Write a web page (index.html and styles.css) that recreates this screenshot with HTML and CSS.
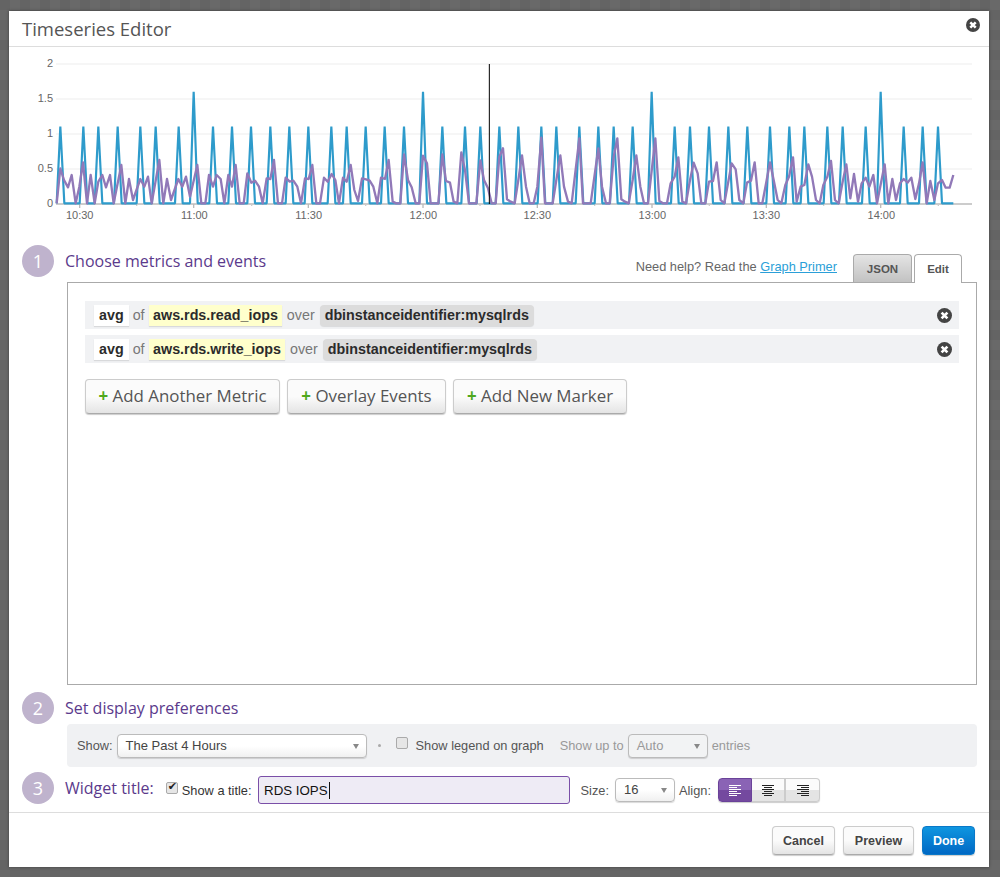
FILE: index.html
```html
<!DOCTYPE html>
<html lang="en">
<head>
    <meta charset="UTF-8">
    <title>Timeseries Editor</title>
    <link rel="stylesheet" href="styles.css">
</head>
<body>
    <div class="modal">
        <div class="modal-header">
            <h1>Timeseries Editor</h1>
            <svg class="close-icon close-top" viewBox="0 0 14 14"><circle cx="7" cy="7" r="7"/><path d="M4.3 4.3l5.4 5.4M9.700 4.300l-5.400 5.400"/></svg>
        </div>

        <svg class="chart" viewBox="27 141 2940 564">
            <g class="grid">
                <line x1="168" y1="192" x2="2916" y2="192"/>
                <line x1="168" y1="297" x2="2916" y2="297"/>
                <line x1="168" y1="402" x2="2916" y2="402"/>
                <line x1="168" y1="507" x2="2916" y2="507"/>
            </g>
            <g class="axis">
                <line x1="168" y1="612" x2="2916" y2="612"/>
                <path d="M239 612v12M581 612v12M925 612v12M1269 612v12M1612 612v12M1956 612v12M2299 612v12M2642 612v12"/>
                <path class="minor" d="M410 612v6M755 612v6M1097 612v6M1440 612v6M1784 612v6M2128 612v6M2471 612v6M2815 612v6"/>
            </g>
            <g class="y-labels">
                <text x="159" y="201">2</text>
                <text x="159" y="306">1.5</text>
                <text x="159" y="411">1</text>
                <text x="159" y="516">0.5</text>
                <text x="159" y="621">0</text>
            </g>
            <g class="x-labels">
                <text x="239" y="657">10:30</text>
                <text x="583" y="657">11:00</text>
                <text x="926" y="657">11:30</text>
                <text x="1270" y="657">12:00</text>
                <text x="1612" y="657">12:30</text>
                <text x="1957" y="657">13:00</text>
                <text x="2299" y="657">13:30</text>
                <text x="2644" y="657">14:00</text>
            </g>
            <polyline class="series-read" points="170,610 181,380 193,610 239,610 250,380 262,610 284,610 295,380 307,610 342,610 353,380 365,610 410,610 421,380 433,610 456,610 467,380 479,610 525,610 536,380 548,610 570,610 581,275 593,610 628,610 639,380 651,610 685,610 696,380 708,610 742,610 753,380 765,610 800,610 811,380 823,610 857,610 868,380 880,610 914,610 925,380 937,610 983,610 994,380 1006,610 1029,610 1040,380 1052,610 1086,610 1097,380 1109,610 1143,610 1154,380 1166,610 1201,610 1212,380 1224,610 1258,610 1269,275 1281,610 1316,610 1327,380 1339,610 1384,610 1395,380 1407,610 1430,610 1441,380 1453,610 1487,610 1498,380 1510,610 1544,610 1555,380 1567,610 1613,610 1624,380 1636,610 1658,610 1669,380 1681,610 1727,610 1738,380 1750,610 1784,610 1795,380 1807,610 1830,610 1841,380 1853,610 1887,610 1898,380 1910,610 1944,610 1955,275 1967,610 2013,610 2024,380 2036,610 2059,610 2070,380 2082,610 2116,610 2127,380 2139,610 2174,610 2185,380 2197,610 2231,610 2242,380 2254,610 2299,610 2310,380 2322,610 2357,610 2368,380 2380,610 2402,610 2413,380 2425,610 2471,610 2482,380 2494,610 2517,610 2528,380 2540,610 2586,610 2597,380 2609,610 2631,610 2642,275 2654,610 2700,610 2711,380 2723,610 2757,610 2768,380 2780,610 2803,610 2814,380 2826,610 2860,610"/>
            <polyline class="series-write" points="170,610 181,505 192,540 204,562 215,525 227,610 238,560 249,487 261,610 272,525 284,610 295,545 307,525 318,562 330,525 341,610 364,495 376,610 387,537 399,600 421,537 433,560 444,530 455,610 478,480 490,610 501,537 513,600 535,537 547,560 558,530 570,590 592,495 604,610 616,610 627,525 639,560 650,525 662,537 673,610 685,525 696,560 707,495 719,610 731,610 742,520 754,548 765,542 777,560 788,610 800,535 811,537 822,480 834,610 846,610 857,533 869,545 880,542 892,560 903,610 915,535 926,537 937,495 949,610 960,610 972,533 983,545 995,522 1006,540 1017,610 1029,533 1040,545 1052,495 1063,570 1074,603 1086,535 1098,538 1109,542 1120,560 1132,610 1143,533 1155,537 1166,480 1178,605 1189,610 1201,610 1212,463 1224,540 1235,562 1247,610 1258,610 1269,467 1281,490 1292,610 1315,610 1327,463 1338,543 1350,548 1361,605 1372,610 1384,457 1395,510 1407,610 1429,610 1441,481 1452,540 1464,565 1475,610 1487,610 1498,470 1509,445 1521,598 1532,605 1544,610 1555,540 1566,466 1578,560 1589,610 1601,610 1612,560 1624,413 1635,610 1658,610 1669,540 1681,466 1692,560 1704,605 1715,610 1738,415 1749,610 1772,610 1795,445 1806,560 1818,610 1829,610 1841,470 1852,415 1864,598 1875,605 1886,610 1898,540 1909,466 1921,560 1932,610 1944,610 1966,415 1978,603 1989,610 2001,610 2012,550 2024,530 2035,472 2047,605 2058,610 2070,540 2081,488 2093,520 2104,610 2116,610 2127,545 2139,543 2150,487 2162,600 2173,610 2195,490 2207,508 2218,600 2230,610 2241,548 2253,542 2264,487 2276,610 2287,610 2310,487 2321,540 2333,600 2344,610 2356,555 2367,530 2379,472 2390,605 2402,560 2413,555 2425,493 2436,530 2448,600 2459,610 2470,555 2482,530 2493,483 2505,600 2516,610 2528,545 2539,493 2551,595 2562,522 2574,605 2585,550 2597,533 2608,560 2620,525 2631,610 2654,493 2665,610 2677,537 2688,600 2700,550 2711,537 2723,548 2734,533 2746,597 2757,550 2768,487 2780,610 2791,543 2803,600 2814,550 2826,540 2837,563 2849,563 2860,525"/>
            <line class="cursor" x1="1468" y1="192" x2="1468" y2="612"/>
        </svg>

        <div class="step step-one">
            <div class="step-head">
                <span class="step-num">1</span>
                <h2>Choose metrics and events</h2>
                <div class="help">Need help? Read the <a href="#">Graph Primer</a></div>
                <div class="tabs">
                    <div class="tab">JSON</div>
                    <div class="tab active">Edit</div>
                </div>
            </div>
            <div class="panel">
                <div class="metric">
                    <span class="chip chip-white">avg</span>
                    <span class="word word-of">of</span>
                    <span class="chip chip-yellow">aws.rds.read_iops</span>
                    <span class="word">over</span>
                    <span class="chip chip-grey">dbinstanceidentifier:mysqlrds</span>
                    <svg class="close-icon" viewBox="0 0 14 14"><circle cx="7" cy="7" r="7"/><path d="M4.3 4.3l5.4 5.400M9.700 4.300l-5.400 5.400"/></svg>
                </div>
                <div class="metric">
                    <span class="chip chip-white">avg</span>
                    <span class="word word-of">of</span>
                    <span class="chip chip-yellow">aws.rds.write_iops</span>
                    <span class="word">over</span>
                    <span class="chip chip-grey">dbinstanceidentifier:mysqlrds</span>
                    <svg class="close-icon" viewBox="0 0 14 14"><circle cx="7" cy="7" r="7"/><path d="M4.3 4.3l5.4 5.400M9.700 4.300l-5.400 5.400"/></svg>
                </div>
                <div class="add-row">
                    <button class="btn-add btn-metric"><b>+</b> Add Another Metric</button>
                    <button class="btn-add btn-events"><b>+</b> Overlay Events</button>
                    <button class="btn-add btn-marker"><b>+</b> Add New Marker</button>
                </div>
            </div>
        </div>

        <div class="step step-two">
            <div class="step-head">
                <span class="step-num">2</span>
                <h2>Set display preferences</h2>
            </div>
            <div class="prefs">
                <span class="label">Show:</span>
                <div class="select select-time">The Past 4 Hours<i class="arrow"></i></div>
                <span class="dot"></span>
                <input type="checkbox" class="check check-legend">
                <span class="label legend-label">Show legend on graph</span>
                <span class="label muted up-to">Show up to</span>
                <div class="select select-auto">Auto<i class="arrow"></i></div>
                <span class="label muted">entries</span>
            </div>
        </div>

        <div class="step step-three">
            <span class="step-num">3</span>
            <h2 class="title-head">Widget title:</h2>
            <div class="title-controls">
                <input type="checkbox" class="check check-title" checked>
                <span class="label show-title">Show a title:</span>
                <div class="title-input">RDS IOPS<i class="caret"></i></div>
                <span class="label">Size:</span>
                <div class="select select-size">16<i class="arrow"></i></div>
                <span class="label">Align:</span>
                <div class="align-group">
                    <button class="align active">
                        <svg viewBox="0 0 12 11"><path d="M0 .5h12M0 2.500h8M0 4.500h12M0 6.500h8M0 8.500h12M0 10.500h8"/></svg>
                    </button>
                    <button class="align">
                        <svg viewBox="0 0 12 11"><path d="M0 .5h12M2 2.500h8M0 4.500h12M2 6.500h8M0 8.500h12M2 10.500h8"/></svg>
                    </button>
                    <button class="align">
                        <svg viewBox="0 0 12 11"><path d="M0 .5h12M4 2.500h8M0 4.500h12M4 6.500h8M0 8.500h12M4 10.500h8"/></svg>
                    </button>
                </div>
            </div>
        </div>

        <div class="modal-footer">
            <button class="btn btn-cancel">Cancel</button>
            <button class="btn btn-preview">Preview</button>
            <button class="btn btn-done">Done</button>
        </div>
    </div>
</body>
</html>
```

FILE: styles.css
```css
html, body {
    height: 100%;
}
body {
    margin: 0;
    padding: 11px 0 0 9px;
    box-sizing: border-box;
    overflow: hidden;
    font-family: "Liberation Sans", Arial, sans-serif;
    font-size: 12.8px;
    color: #444;
    background-color: #666;
    background-image: repeating-conic-gradient(#696969 0 25%, #646464 0 50%);
    background-size: 20px 20px;
}
h1, h2 {
    margin: 0;
    font-family: "Open Sans", sans-serif;
    font-weight: 400;
}
button {
    font-family: inherit;
    cursor: pointer;
}
.modal {
    width: 980px;
    height: 856px;
    background: #fff;
    box-shadow: 0 0 3px rgba(0, 0, 0, 0.4);
}
.modal-header {
    height: 35px;
    display: flex;
    justify-content: space-between;
    padding: 0 9px 0 13px;
    border-bottom: 1px solid #ddd;
}
.modal-header h1 {
    font-size: 18.5px;
    line-height: 36px;
    color: #555;
}
.close-icon {
    width: 15px;
    height: 15px;
    flex: none;
}
.close-icon circle {
    fill: #444;
}
.close-icon path {
    fill: none;
    stroke: #fff;
    stroke-width: 2.500;
}
.close-top {
    width: 14px;
    height: 14px;
    margin-top: 7px;
}

/* chart */
.chart {
    display: block;
    width: 980px;
    height: 188px;
}
.chart text {
    font-family: "Liberation Sans", Arial, sans-serif;
    font-size: 33px;
    fill: #666;
}
.y-labels text {
    text-anchor: end;
}
.x-labels text {
    text-anchor: middle;
}
.grid line {
    stroke: #f3f3f3;
    stroke-width: 5;
}
.axis line, .axis path {
    stroke: #bbb;
    stroke-width: 4;
    fill: none;
}
.axis path.minor {
    stroke: #ccc;
}
.series-read {
    fill: none;
    stroke: #2e9bcb;
    stroke-width: 6.500;
    stroke-linejoin: bevel;
}
.series-write {
    fill: none;
    stroke: #9179b8;
    stroke-width: 7;
    stroke-linejoin: round;
}
.cursor {
    stroke: #000;
    stroke-width: 3;
}

/* steps */
.step {
    padding: 0 12px 0 13px;
}
.step-one {
    margin-top: 10px;
}
.step-two {
    margin-top: 7px;
}
.step-three {
    margin-top: 5px;
    display: flex;
    align-items: center;
    height: 32px;
}
.step-head {
    display: flex;
}
.step-one .step-head {
    height: 37px;
}
.step-num {
    flex: none;
    width: 32px;
    height: 32px;
    margin-right: 11px;
    border-radius: 50%;
    background: #bfb3cd;
    color: #fff;
    font-family: "Open Sans", sans-serif;
    font-size: 18px;
    line-height: 32px;
    text-align: center;
}
.step h2 {
    font-size: 16px;
    line-height: 32px;
    color: #5b3a8c;
}
.step .title-head {
    margin-right: 12px;
}
.title-controls {
    display: flex;
    align-items: center;
    padding-top: 4px;
}

/* tabs + help link */
.help {
    margin-left: auto;
    margin-right: 16px;
    padding-top: 14px;
    color: #666;
}
.help a {
    color: #2b9fd8;
}
.tabs {
    display: flex;
    align-items: flex-end;
    gap: 2px;
    margin-right: 15px;
    position: relative;
    z-index: 1;
}
.tab {
    width: 59px;
    height: 28px;
    box-sizing: border-box;
    border: 1px solid #aaa;
    border-bottom: 0;
    border-radius: 4px 4px 0 0;
    background: linear-gradient(#e4e4e4, #c2c2c2);
    font-size: 11.5px;
    font-weight: bold;
    line-height: 29px;
    text-align: center;
    color: #555;
}
.tab.active {
    width: 48px;
    height: 29px;
    margin-bottom: -1px;
    background: #fff;
}

/* metrics panel */
.panel {
    height: 403px;
    box-sizing: border-box;
    margin-left: 45px;
    padding: 18px 17px;
    border: 1px solid #aaa;
}
.metric {
    display: flex;
    align-items: center;
    height: 28px;
    margin-bottom: 6px;
    padding: 0 7px 0 9px;
    background: #f1f2f4;
    font-size: 14.3px;
}
.chip {
    height: 21px;
    padding: 0 4px;
    font-weight: bold;
    line-height: 21px;
    color: #2b2b2b;
    box-shadow: 0 1px 1px rgba(0, 0, 0, 0.1);
}
.chip-white {
    padding: 0 5px;
    background: #fff;
}
.chip-yellow {
    background: #ffffcc;
}
.chip-grey {
    padding: 0 5px;
    border-radius: 4px;
    background: #dcdcdc;
}
.word {
    margin: 0 5px;
    color: #777;
}
.word-of {
    margin: 0 4.500px 0 4px;
}
.metric .close-icon {
    margin-left: auto;
}
.add-row {
    display: flex;
    gap: 7px;
    margin-top: 16px;
}
.btn-add {
    height: 35px;
    padding: 0 0 2px;
    border: 1px solid #ccc;
    border-bottom-color: #aaa;
    border-radius: 4px;
    background: linear-gradient(#fbfbfb 50%, #e4e4e4);
    box-shadow: 0 1px 1px rgba(0, 0, 0, 0.2);
    font-family: "Open Sans", sans-serif;
    font-size: 16.900px;
    color: #555;
}
.btn-add b {
    color: #4fa81e;
}
.btn-metric {
    width: 195px;
}
.btn-events {
    width: 159px;
}
.btn-marker {
    width: 174px;
}

/* display prefs */
.prefs {
    display: flex;
    align-items: center;
    height: 43px;
    box-sizing: border-box;
    margin-left: 45px;
    padding: 0 10px;
    border-radius: 4px;
    background: #f0f1f3;
}
.label {
    flex: none;
    color: #555;
}
.muted {
    color: #999;
}
.select {
    position: relative;
    flex: none;
    height: 24px;
    box-sizing: border-box;
    border: 1px solid #bbb;
    border-radius: 4px;
    background: linear-gradient(#fff 50%, #f0f0f0);
    box-shadow: 0 1px 1px rgba(0, 0, 0, 0.15);
    padding-left: 8px;
    line-height: 22px;
    font-size: 13px;
    color: #444;
}
.arrow {
    position: absolute;
    right: 7px;
    top: 9px;
    border-left: 3.500px solid transparent;
    border-right: 3.500px solid transparent;
    border-top: 5px solid #888;
}
.select-time {
    width: 250px;
    margin-left: 4px;
}
.select-auto {
    width: 80px;
    margin: 0 4px;
    background: #f2f3f4;
    color: #999;
}
.select-size {
    width: 60px;
    margin: 0 4px 0 6px;
}
.dot {
    flex: none;
    width: 3px;
    height: 3px;
    margin: 0 15px 0 11px;
    border-radius: 50%;
    background: #aaa;
}
.check {
    appearance: none;
    flex: none;
    position: relative;
    width: 12px;
    height: 12px;
    margin: 0;
    border: 1px solid #aaa;
    border-radius: 2px;
    background: #e6e6e6;
    box-sizing: border-box;
}
.check:checked::after {
    content: "\2714";
    position: absolute;
    left: 1px;
    top: -2px;
    font-family: "DejaVu Sans", sans-serif;
    font-size: 11px;
    line-height: 12px;
    color: #222;
}
.check-legend {
    margin-top: -5px;
}
.check-title {
    margin-top: -4px;
}
.legend-label {
    margin-left: 8px;
}
.up-to {
    margin-left: 16px;
}

/* widget title */
.show-title {
    margin-left: 4px;
    color: #333;
}
.title-input {
    flex: none;
    width: 312px;
    height: 28px;
    box-sizing: border-box;
    margin: 0 11px 0 6px;
    padding-left: 5.500px;
    border: 1px solid #7a4fa8;
    border-radius: 3px;
    background: #eeebf5;
    font-size: 13.300px;
    line-height: 27px;
    color: #111;
}
.caret {
    display: inline-block;
    height: 17px;
    margin-left: 1px;
    vertical-align: -4px;
    border-left: 1px solid #111;
}
.align-group {
    display: flex;
    margin-left: 7px;
    border-radius: 4px;
    box-shadow: 0 1px 1px rgba(0, 0, 0, 0.2);
}
.align {
    width: 34px;
    height: 24px;
    padding: 0;
    border: 1px solid #ccc;
    border-left: 0;
    border-right-width: 2px;
    background: linear-gradient(#fbfbfb 50%, #e4e4e4 50%);
}
.align:last-child {
    border-right-width: 1px;
    border-radius: 0 4px 4px 0;
}
.align.active {
    border: 1px solid #6a4299;
    border-radius: 4px 0 0 4px;
    background: linear-gradient(#8a63b5 50%, #74499f 50%);
}
.align svg {
    display: block;
    width: 12px;
    height: 11px;
    margin: auto;
    fill: none;
    stroke: #222;
    stroke-width: 1;
}
.align.active svg {
    stroke: #fff;
}

/* footer */
.modal-footer {
    display: flex;
    justify-content: flex-end;
    gap: 8px;
    margin-top: 8px;
    padding: 13px 14px 0;
    border-top: 1px solid #ddd;
}
.btn {
    height: 29px;
    padding: 0;
    border: 1px solid #ccc;
    border-bottom-color: #aaa;
    border-radius: 4px;
    background: linear-gradient(#fbfbfb 50%, #e4e4e4);
    box-shadow: 0 1px 1px rgba(0, 0, 0, 0.2);
    font-size: 12.5px;
    font-weight: bold;
    color: #444;
}
.btn-cancel {
    width: 63px;
}
.btn-preview {
    width: 71px;
}
.btn-done {
    width: 53px;
    border-color: #0a78c8;
    background: linear-gradient(#0f96e0, #0068c4);
    color: #fff;
}
```
